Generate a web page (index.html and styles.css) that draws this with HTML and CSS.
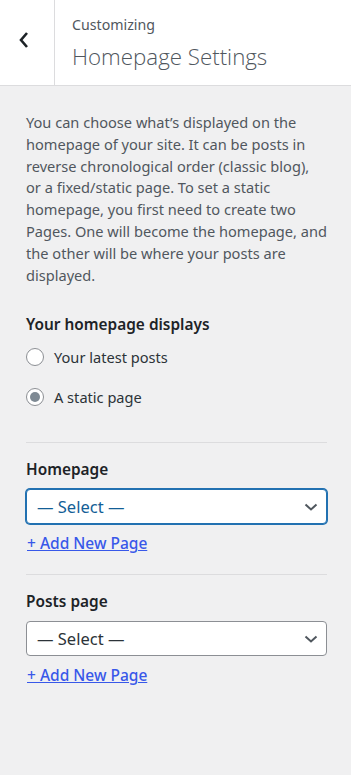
FILE: index.html
```html
<!DOCTYPE html>
<html lang="en">
<head>
<meta charset="UTF-8">
<meta name="viewport" content="width=device-width, initial-scale=1.0">
<title>Homepage Settings</title>
<link rel="stylesheet" href="styles.css">
</head>
<body>
<div class="panel">
    <div class="panel-header">
        <button type="button" class="back-btn" aria-label="Back">
            <svg width="12" height="18" viewBox="0 0 12 18"><path d="M9 2 L3 9 L9 16" fill="none" stroke="#1d2327" stroke-width="2.6"/></svg>
        </button>
        <div class="panel-title">
            <span class="crumb">Customizing</span>
            <h1>Homepage Settings</h1>
        </div>
    </div>

    <div class="panel-body">
        <p class="description">You can choose what’s displayed on the homepage of your site. It can be posts in reverse chronological order (classic blog), or a fixed/static page. To set a static homepage, you first need to create two Pages. One will become the homepage, and the other will be where your posts are displayed.</p>

        <div class="control">
            <span class="control-title">Your homepage displays</span>
            <label class="radio-row">
                <input type="radio" name="show_on_front" value="posts">
                <span>Your latest posts</span>
            </label>
            <label class="radio-row">
                <input type="radio" name="show_on_front" value="page" checked>
                <span>A static page</span>
            </label>
        </div>

        <div class="control bordered">
            <label class="control-title" for="pageOnFront">Homepage</label>
            <div class="select-wrap">
                <select id="pageOnFront" class="focused">
                    <option>— Select —</option>
                </select>
                <svg class="chevron" width="14" height="8" viewBox="0 0 14 8"><path d="M1.5 1.5 L7 6.5 L12.5 1.5" fill="none" stroke="#50575e" stroke-width="2"/></svg>
            </div>
            <a href="#" class="add-link">+ Add New Page</a>
        </div>

        <div class="control bordered">
            <label class="control-title" for="pageForPosts">Posts page</label>
            <div class="select-wrap">
                <select id="pageForPosts">
                    <option>— Select —</option>
                </select>
                <svg class="chevron" width="14" height="8" viewBox="0 0 14 8"><path d="M1.5 1.5 L7 6.5 L12.5 1.5" fill="none" stroke="#50575e" stroke-width="2"/></svg>
            </div>
            <a href="#" class="add-link">+ Add New Page</a>
        </div>
    </div>
</div>
</body>
</html>
```

FILE: styles.css
```css
body {
    margin: 0;
    padding: 0;
    background-color: #f0f0f1;
    font-family: "Noto Sans", "Open Sans", sans-serif;
    font-size: 14.6px;
    color: #1d2327;
}

.panel-header {
    display: flex;
    height: 85px;
    background-color: #fff;
    border-bottom: 1px solid #dcdcde;
}

.back-btn {
    width: 55px;
    height: 85px;
    padding: 0;
    border: none;
    border-right: 1px solid #dcdcde;
    background: #fff;
    display: flex;
    align-items: center;
    justify-content: center;
    flex-shrink: 0;
}

.back-btn svg {
    margin-left: -6px;
    margin-top: -5px;
}

.panel-title {
    padding: 14px 0 0 17px;
    color: #50575e;
}

.crumb {
    display: block;
    font-size: 14.2px;
    line-height: 22px;
}

.panel-title h1 {
    margin: 0;
    margin-top: 6px;
    font-family: "Open Sans", "Noto Sans", sans-serif;
    font-size: 22.3px;
    font-weight: 300;
    line-height: 30px;
}

.panel-body {
    padding: 26px 24px 40px 26px;
}

.description {
    margin: 0 0 28px;
    color: #50575e;
    line-height: 21.8px;
}

.control {
    display: flex;
    flex-direction: column;
}

.control-title {
    font-size: 15.4px;
    font-weight: 600;
    line-height: 22px;
    margin-bottom: 10px;
    color: #1d2327;
}

.radio-row {
    display: flex;
    align-items: center;
    gap: 10px;
    height: 22px;
    margin-bottom: 18px;
    color: #2c3338;
}

.radio-row input {
    appearance: none;
    width: 18px;
    height: 18px;
    margin: 0;
    border: 1px solid #8c8f94;
    border-radius: 50%;
    background: #fff;
    display: flex;
    align-items: center;
    justify-content: center;
}

.radio-row input:checked::before {
    content: "";
    width: 10px;
    height: 10px;
    border-radius: 50%;
    background-color: #7e8993;
}

.bordered {
    border-top: 1px solid #dcdcde;
    margin-top: 16px;
    padding-top: 16px;
}

.bordered .control-title {
    margin-bottom: 8px;
}

.bordered + .bordered {
    margin-top: 20px;
    padding-top: 16px;
}

.select-wrap {
    position: relative;
}

select {
    appearance: none;
    width: 100%;
    height: 35px;
    padding: 0 30px 0 10px;
    font-family: inherit;
    font-size: 16.5px;
    color: #2c3338;
    background-color: #fff;
    border: 1px solid #8c8f94;
    border-radius: 4px;
}

select.focused {
    border-color: #2271b1;
    box-shadow: 0 0 0 1px #2271b1;
    color: #135e96;
}

.chevron {
    position: absolute;
    right: 9px;
    top: 14px;
    pointer-events: none;
}

.add-link {
    align-self: flex-start;
    margin-top: 8px;
    margin-left: 1px;
    font-size: 15.5px;
    font-weight: 500;
    line-height: 22px;
    color: #3858e9;
    text-decoration: underline;
}
```
